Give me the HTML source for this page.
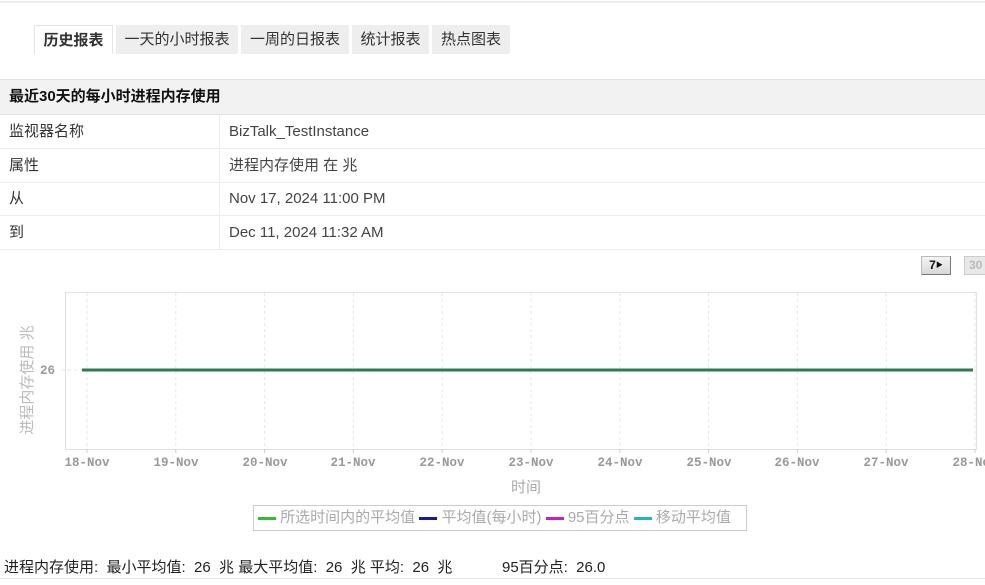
<!DOCTYPE html>
<html><head><meta charset="utf-8"><style>
*{margin:0;padding:0;box-sizing:border-box}
body{width:985px;height:585px;background:#fff;position:relative;overflow:hidden;font-family:"Liberation Sans","Noto Sans CJK SC",sans-serif;color:#333;font-size:14px}
.a{position:absolute;white-space:nowrap}
.tab{position:absolute;top:25px;height:29px;background:#eeeeee;line-height:29px;text-align:center;font-size:15px;color:#333}
.row{position:absolute;left:0;width:985px;height:34px;border-bottom:1px solid #ececec;line-height:33px;font-size:15px}
.row span{position:absolute;left:9px}
.row b{position:absolute;left:229px;font-weight:normal;color:#444}
.xl{position:absolute;top:456px;white-space:nowrap;font-family:"Liberation Mono","DejaVu Sans Mono",monospace;font-size:12.5px;font-weight:bold;color:#999;transform:translateX(-50%)}
</style></head><body>
<div class="a" style="left:0;top:1px;width:985px;height:2px;background:#eee"></div>
<div class="tab" style="left:34px;width:79px;background:#fff;border:1px solid #e4e4e4;border-bottom:none;font-weight:bold">历史报表</div>
<div class="tab" style="left:116px;width:122px">一天的小时报表</div>
<div class="tab" style="left:241px;width:108px">一周的日报表</div>
<div class="tab" style="left:352px;width:77px">统计报表</div>
<div class="tab" style="left:432px;width:78px">热点图表</div>
<div class="a" style="left:0;top:79px;width:985px;height:36px;background:#f2f2f2;border-top:1px solid #e2e2e2;border-bottom:1px solid #e2e2e2;font-weight:bold;font-size:15px;line-height:34px;padding-left:9px;color:#111">最近30天的每小时进程内存使用</div>
<div class="a" style="left:219px;top:115px;width:1px;height:134px;background:#ececec"></div>
<div class="row" style="top:115px"><span>监视器名称</span><b>BizTalk_TestInstance</b></div>
<div class="row" style="top:149px"><span>属性</span><b>进程内存使用 在 兆</b></div>
<div class="row" style="top:182px"><span>从</span><b>Nov 17, 2024 11:00 PM</b></div>
<div class="row" style="top:216px"><span>到</span><b>Dec 11, 2024 11:32 AM</b></div>
<div class="a" style="left:921px;top:256px;width:30px;height:19px;background:linear-gradient(#f4f4f4,#d8d8d8);border:1px solid #bbb;border-right-color:#777;border-bottom-color:#777;font-weight:bold;font-size:12px;line-height:17px;text-align:center;color:#111">7<span style="font-size:7px;vertical-align:top">▶</span></div>
<div class="a" style="left:964px;top:256px;width:25px;height:19px;background:#e8e8e8;border:1px solid #ccc;font-size:12px;line-height:17px;padding-left:4px;color:#bbb;font-weight:bold">30</div>
<svg class="a" style="left:0;top:0" width="985" height="585">
<rect x="65.5" y="292.5" width="911" height="157" fill="none" stroke="#e2e2e2"/>
<g stroke="#e6e6e6" stroke-dasharray="3,3">
<line x1="87" y1="293" x2="87" y2="449"/><line x1="175.8" y1="293" x2="175.8" y2="449"/><line x1="264.6" y1="293" x2="264.6" y2="449"/><line x1="353.4" y1="293" x2="353.4" y2="449"/><line x1="442.2" y1="293" x2="442.2" y2="449"/><line x1="531" y1="293" x2="531" y2="449"/><line x1="619.8" y1="293" x2="619.8" y2="449"/><line x1="708.6" y1="293" x2="708.6" y2="449"/><line x1="797.4" y1="293" x2="797.4" y2="449"/><line x1="886.2" y1="293" x2="886.2" y2="449"/><line x1="975" y1="293" x2="975" y2="449"/>
<line x1="62" y1="370" x2="976" y2="370"/>
</g>
<g stroke="#ccc"><line x1="87" y1="449" x2="87" y2="453"/><line x1="175.8" y1="449" x2="175.8" y2="453"/><line x1="264.6" y1="449" x2="264.6" y2="453"/><line x1="353.4" y1="449" x2="353.4" y2="453"/><line x1="442.2" y1="449" x2="442.2" y2="453"/><line x1="531" y1="449" x2="531" y2="453"/><line x1="619.8" y1="449" x2="619.8" y2="453"/><line x1="708.6" y1="449" x2="708.6" y2="453"/><line x1="797.4" y1="449" x2="797.4" y2="453"/><line x1="886.2" y1="449" x2="886.2" y2="453"/><line x1="975" y1="449" x2="975" y2="453"/></g>
<line x1="82" y1="370" x2="973" y2="370" stroke="#2e7a55" stroke-width="3"/>
<text x="40" y="374" font-family="Liberation Mono,monospace" font-size="12.5" font-weight="bold" fill="#999">26</text>
<text transform="translate(32,380) rotate(-90)" text-anchor="middle" font-family="Liberation Sans,Noto Sans CJK SC,sans-serif" font-size="15" fill="#bbb">进程内存使用 兆</text>
</svg>
<div class="xl" style="left:87px">18-Nov</div><div class="xl" style="left:176px">19-Nov</div><div class="xl" style="left:265px">20-Nov</div><div class="xl" style="left:353px">21-Nov</div><div class="xl" style="left:442px">22-Nov</div><div class="xl" style="left:531px">23-Nov</div><div class="xl" style="left:620px">24-Nov</div><div class="xl" style="left:709px">25-Nov</div><div class="xl" style="left:797px">26-Nov</div><div class="xl" style="left:886px">27-Nov</div><div class="xl" style="left:975px">28-Nov</div>
<div class="a" style="left:511px;top:476px;font-size:15px;color:#aaa">时间</div>
<div class="a" style="left:253px;top:505px;width:494px;height:26px;border:1px solid #ccc;font-size:15px;line-height:24px;color:#aaa;padding-left:4px">
<span style="display:inline-block;width:18px;height:3px;background:#2ebf2e;vertical-align:middle"></span> 所选时间内的平均值
<span style="display:inline-block;width:18px;height:3px;background:#1a1a9a;vertical-align:middle"></span> 平均值(每小时)
<span style="display:inline-block;width:18px;height:3px;background:#c81ec8;vertical-align:middle"></span> 95百分点
<span style="display:inline-block;width:18px;height:3px;background:#20b8b8;vertical-align:middle"></span> 移动平均值</div>
<div class="a" style="left:4px;top:556px;font-size:15px;color:#222">进程内存使用:&nbsp; 最小平均值:&nbsp; 26&nbsp; 兆 最大平均值:&nbsp; 26&nbsp; 兆 平均:&nbsp; 26&nbsp; 兆</div>
<div class="a" style="left:502px;top:556px;font-size:15px;color:#222">95百分点:&nbsp; 26.0</div>
<div class="a" style="left:0;top:578px;width:985px;height:1px;background:#e6e6e6"></div>
</body></html>
